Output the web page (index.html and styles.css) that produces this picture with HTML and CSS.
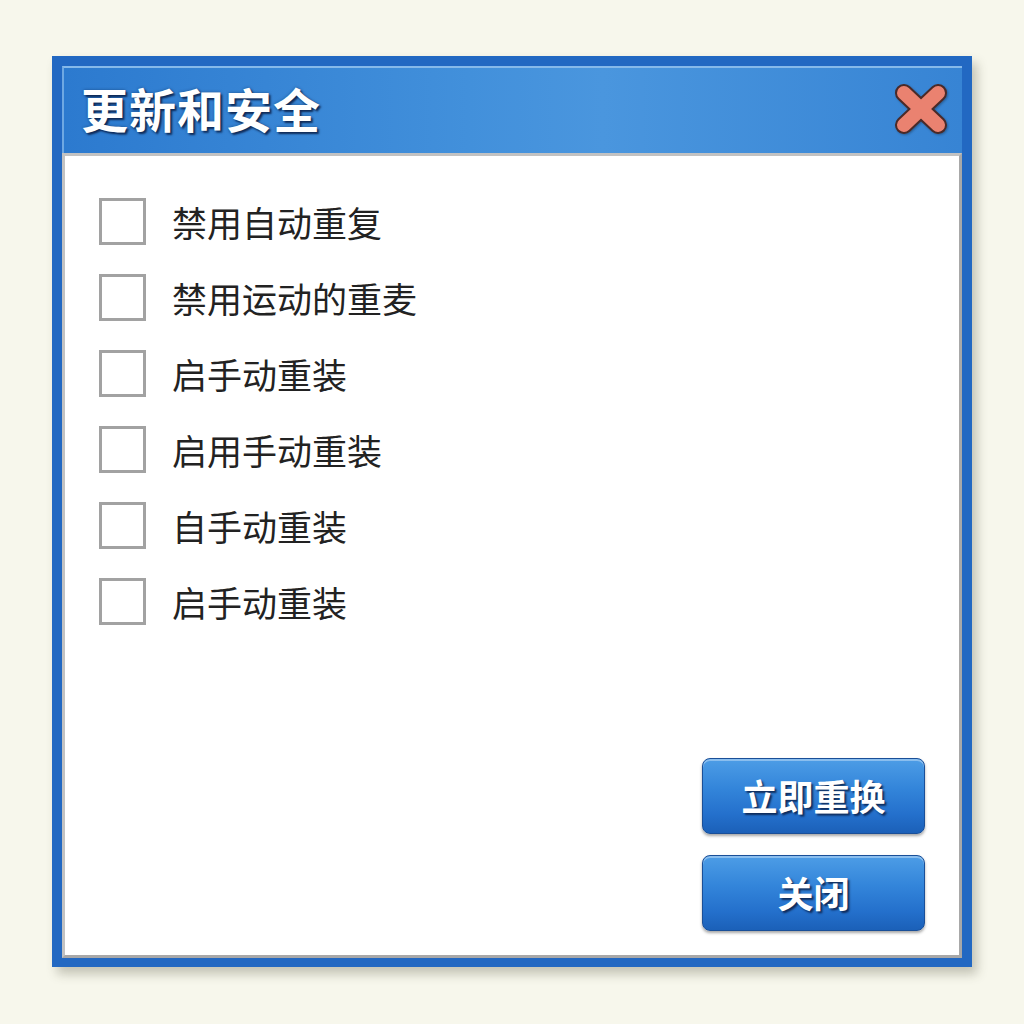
FILE: index.html
```html
<!DOCTYPE html>
<html lang="zh-CN">
<head>
<meta charset="utf-8">
<link rel="stylesheet" href="styles.css">
</head>
<body>
<div class="window">
  <div class="titlebar">
    <h1 class="title">更新和安全</h1>
    <svg class="close" width="54" height="52" viewBox="0 0 54 52">
      <g stroke-linecap="round">
        <line x1="10" y1="10" x2="44" y2="42" stroke="#4a2a28" stroke-width="18"/>
        <line x1="44" y1="10" x2="10" y2="42" stroke="#4a2a28" stroke-width="18"/>
        <line x1="10" y1="10" x2="44" y2="42" stroke="#ea8270" stroke-width="14"/>
        <line x1="44" y1="10" x2="10" y2="42" stroke="#ea8270" stroke-width="14"/>
      </g>
    </svg>
  </div>
  <div class="panel">
    <ul class="options">
      <li class="option"><span class="box"></span><span class="label">禁用自动重复</span></li>
      <li class="option"><span class="box"></span><span class="label">禁用运动的重麦</span></li>
      <li class="option"><span class="box"></span><span class="label">启手动重装</span></li>
      <li class="option"><span class="box"></span><span class="label">启用手动重装</span></li>
      <li class="option"><span class="box"></span><span class="label">自手动重装</span></li>
      <li class="option"><span class="box"></span><span class="label">启手动重装</span></li>
    </ul>
    <div class="actions">
      <button class="btn">立即重换</button>
      <button class="btn">关闭</button>
    </div>
  </div>
</div>
</body>
</html>
```

FILE: styles.css
```css
html, body {
  margin: 0;
  padding: 0;
}
body {
  background: #f7f7ec;
  width: 1024px;
  height: 1024px;
  font-family: "Noto Sans CJK SC", "Noto Sans", sans-serif;
  padding: 56px 0 0 52px;
  box-sizing: border-box;
}
.window {
  width: 920px;
  height: 911px;
  box-sizing: border-box;
  background: #2268c2;
  padding: 10px 10px 9px 10px;
  display: flex;
  flex-direction: column;
  box-shadow: 5px 7px 10px rgba(60, 60, 40, 0.28);
}
.titlebar {
  height: 87px;
  flex: none;
  box-sizing: border-box;
  border-top: 2px solid #86b9ea;
  border-left: 2px solid #6ea8e2;
  background: linear-gradient(90deg, #2c7acf 0%, #4290db 45%, #4a96de 60%, #3784d4 100%);
  display: flex;
  align-items: center;
  justify-content: space-between;
  padding: 0 14px 6px 17px;
}
.title {
  margin: 0;
  font-size: 47px;
  font-weight: 700;
  color: #ffffff;
  letter-spacing: 1px;
  line-height: 1;
  text-shadow: 2px 2px 2px rgba(10, 30, 70, 0.85), 0 0 3px rgba(10, 30, 70, 0.5);
}
.close {
  display: block;
  margin-top: 2px;
  filter: drop-shadow(1px 1px 1px rgba(0,0,0,0.3));
}
.panel {
  flex: 1;
  background: #ffffff;
  border: 3px solid #c2c2c2;
  border-right-color: #a8a8a8;
  border-bottom-color: #a8a8a8;
  display: flex;
  flex-direction: column;
  justify-content: space-between;
  padding: 42px 34px 24px 34px;
}
.options {
  list-style: none;
  margin: 0;
  padding: 0;
  display: flex;
  flex-direction: column;
  gap: 29px;
}
.option {
  display: flex;
  align-items: center;
  gap: 26px;
  height: 47px;
}
.box {
  width: 47px;
  height: 47px;
  box-sizing: border-box;
  border: 3px solid #a2a2a2;
  background: #ffffff;
  flex: none;
}
.label {
  font-size: 35px;
  color: #222222;
  line-height: 1;
}
.actions {
  display: flex;
  flex-direction: column;
  align-items: flex-end;
  gap: 21px;
}
.btn {
  width: 223px;
  height: 76px;
  border: 1px solid #1a4f98;
  border-radius: 8px;
  background: linear-gradient(180deg, #4d9de6 0%, #3385da 40%, #2470cc 75%, #1b60b8 100%);
  box-shadow: inset 0 2px 0 rgba(255,255,255,0.35), 0 2px 3px rgba(0,0,0,0.35);
  color: #ffffff;
  font-family: "Noto Sans CJK SC", "Noto Sans", sans-serif;
  font-size: 36px;
  font-weight: 700;
  text-shadow: 2px 2px 2px rgba(10, 30, 70, 0.85);
  padding: 0 0 2px 0;
  cursor: pointer;
}
```
